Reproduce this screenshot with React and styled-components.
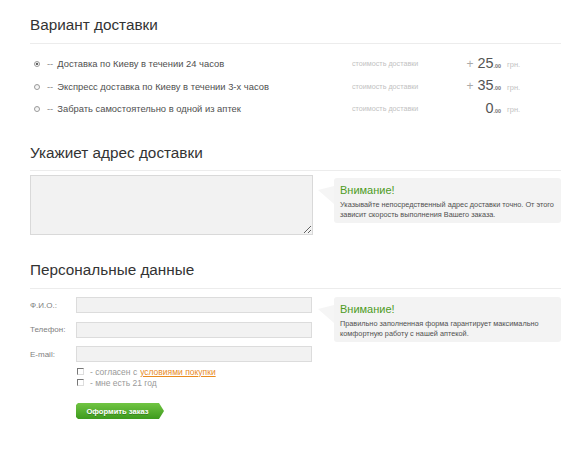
import React from "react";
import styled, { createGlobalStyle, css } from "styled-components";

const font = css`
  font-family: "Liberation Sans", Arial, sans-serif;
`;

const Global = createGlobalStyle`
  html, body { margin: 0; padding: 0; background: #fff; }
  body { font-family: "Liberation Sans", Arial, sans-serif; color: #555; }
`;

const Page = styled.div`
  ${font}
  width: 531px;
  padding: 16px 0 0 30px;
`;

const Section = styled.section`
  margin-bottom: ${(p) => p.$mb || 0}px;
`;

const Heading = styled.h2`
  ${font}
  margin: 0;
  font-weight: normal;
  font-size: 15.3px;
  line-height: 18px;
  color: #333;
  padding-bottom: ${(p) => p.$pb || 8}px;
  border-bottom: 1px solid #ececec;
`;

const Options = styled.div`
  padding: 9px 0 0 4px;
`;

const OptionRow = styled.label`
  display: grid;
  grid-template-columns: 318px 88px 61px auto;
  align-items: center;
  height: 22.5px;
  line-height: 12px;
`;

const OptionMain = styled.span`
  display: flex;
  align-items: center;
  font-size: 9.4px;
  color: #505050;
`;

const Radio = styled.span`
  box-sizing: border-box;
  width: 6px;
  height: 6px;
  border: 1px solid #9a9a9a;
  border-radius: 50%;
  background: linear-gradient(#eee, #fff);
  display: inline-flex;
  align-items: center;
  justify-content: center;
  margin-right: 7px;
  &::after {
    content: "";
    width: 2px;
    height: 2px;
    border-radius: 50%;
    background: ${(p) => (p.$checked ? "#333" : "transparent")};
  }
`;

const Dash = styled.span`
  color: #888;
  margin-right: 4px;
`;

const CostLabel = styled.span`
  font-size: 7.2px;
  color: #c2c2c2;
`;

const Price = styled.span`
  text-align: right;
  font-size: 14.4px;
  line-height: 14px;
  color: #555;
  white-space: nowrap;
`;

const Plus = styled.span`
  font-size: 12px;
  color: #aaa;
  margin-right: 4px;
`;

const Cents = styled.span`
  font-size: 5.4px;
  font-weight: bold;
  color: #777;
`;

const Unit = styled.span`
  font-size: 7.5px;
  color: #c2c2c2;
  padding-left: 6px;
  padding-top: 2px;
`;

const TwoCol = styled.div`
  display: flex;
  align-items: flex-start;
  padding-top: ${(p) => p.$pt || 0}px;
`;

const LeftCol = styled.div`
  width: 283px;
  flex: none;
`;

const TextArea = styled.textarea`
  display: block;
  box-sizing: border-box;
  width: 283px;
  height: 60px;
  background: #f2f2f2;
  border: 1px solid #d9d9d9;
  margin: 0;
  resize: both;
  outline: none;
`;

const Callout = styled.div`
  position: relative;
  margin-left: 21px;
  margin-top: ${(p) => p.$mt || 0}px;
  width: 227px;
  height: 45px;
  box-sizing: border-box;
  background: #f3f3f3;
  border-radius: 3px;
  padding: 5px 6px 0 6px;
  &::before {
    content: "";
    position: absolute;
    left: -16px;
    top: 8px;
    width: 16px;
    height: 18px;
    background: #f5f5f5;
    clip-path: polygon(0 4px, 100% 0, 100% 100%);
  }
`;

const CalloutTitle = styled.div`
  font-size: 11px;
  line-height: 14px;
  color: #4d9b1e;
  margin-bottom: 3px;
`;

const CalloutText = styled.div`
  font-size: 7.3px;
  line-height: 10px;
  color: #505050;
`;

const FormGrid = styled.div`
  display: grid;
  grid-template-columns: 46px 236px;
  row-gap: 8.5px;
  align-items: center;
`;

const FieldLabel = styled.span`
  font-size: 8px;
  color: #808080;
`;

const Input = styled.input`
  box-sizing: border-box;
  width: 236px;
  height: 16px;
  margin: 0;
  background: #f2f2f2;
  border: 1px solid #dcdcdc;
  outline: none;
`;

const Checks = styled.div`
  padding: 4px 0 0 47px;
  display: flex;
  flex-direction: column;
`;

const CheckRow = styled.label`
  display: flex;
  align-items: center;
  height: 11px;
  font-size: 8.5px;
  color: #999;
`;

const Box = styled.span`
  box-sizing: border-box;
  width: 7px;
  height: 7px;
  border: 1px solid #777;
  border-right-color: #ddd;
  border-bottom-color: #ddd;
  margin-right: 6px;
  background: #fff;
`;

const Link = styled.a`
  color: #e88b1f;
  text-decoration: underline;
  margin-left: 3px;
`;

const SubmitWrap = styled.div`
  padding: 15px 0 0 46px;
`;

const Submit = styled.button`
  ${font}
  display: block;
  width: 88px;
  height: 16px;
  border: none;
  padding: 0 5px 0 0;
  font-size: 7.6px;
  font-weight: bold;
  color: #fff;
  background: linear-gradient(#71c543, #3d9a1d);
  clip-path: polygon(0 2px, 2px 0, 83px 0, 88px 8px, 83px 16px, 2px 16px, 0 14px);
  text-shadow: 0 1px 0 rgba(0, 0, 0, 0.25);
  cursor: pointer;
`;

const options = [
  { text: "Доставка по Киеву в течении 24 часов", price: "25", plus: true, checked: true },
  { text: "Экспресс доставка по Киеву в течении 3-х часов", price: "35", plus: true },
  { text: "Забрать самостоятельно в одной из аптек", price: "0", plus: false },
];

export default function App() {
  return (
    <>
      <Global />
      <Page>
        <Section $mb={23.5}>
          <Heading $pb={9}>Вариант доставки</Heading>
          <Options>
            {options.map((o) => (
              <OptionRow key={o.text}>
                <OptionMain>
                  <Radio $checked={o.checked} />
                  <Dash>--</Dash>
                  {o.text}
                </OptionMain>
                <CostLabel>стоимость доставки</CostLabel>
                <Price>
                  {o.plus && <Plus>+</Plus>}
                  {o.price}
                  <Cents>.00</Cents>
                </Price>
                <Unit>грн.</Unit>
              </OptionRow>
            ))}
          </Options>
        </Section>
        <Section $mb={26}>
          <Heading $pb={8}>Укажиет адрес доставки</Heading>
          <TwoCol $pt={4}>
            <LeftCol>
              <TextArea />
            </LeftCol>
            <Callout $mt={3}>
              <CalloutTitle>Внимание!</CalloutTitle>
              <CalloutText>
                Указывайте непосредственный адрес доставки точно. От этого зависит скорость выполнения Вашего заказа.
              </CalloutText>
            </Callout>
          </TwoCol>
        </Section>
        <Section>
          <Heading $pb={9}>Персональные данные</Heading>
          <TwoCol $pt={8}>
            <LeftCol>
              <FormGrid>
                <FieldLabel>Ф.И.О.:</FieldLabel>
                <Input />
                <FieldLabel>Телефон:</FieldLabel>
                <Input />
                <FieldLabel>E-mail:</FieldLabel>
                <Input />
              </FormGrid>
              <Checks>
                <CheckRow>
                  <Box />- согласен с<Link href="#">условиями покупки</Link>
                </CheckRow>
                <CheckRow>
                  <Box />- мне есть 21 год
                </CheckRow>
              </Checks>
              <SubmitWrap>
                <Submit>Оформить заказ</Submit>
              </SubmitWrap>
            </LeftCol>
            <Callout $mt={0}>
              <CalloutTitle>Внимание!</CalloutTitle>
              <CalloutText>
                Правильно заполненная форма гарантирует максимально комфортную работу с нашей аптекой.
              </CalloutText>
            </Callout>
          </TwoCol>
        </Section>
      </Page>
    </>
  );
}
